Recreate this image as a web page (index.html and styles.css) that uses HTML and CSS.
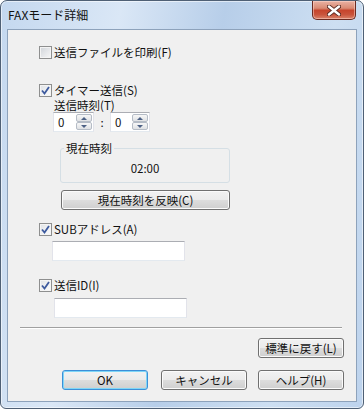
FILE: index.html
```html
<!DOCTYPE html>
<html lang="ja">
<head>
    <meta charset="UTF-8">
    <title>FAXモード詳細</title>
    <link rel="stylesheet" href="styles.css">
</head>
<body>
<div class="window">
    <div class="titlebar">
        <span class="title">FAXモード詳細</span>
        <button class="close">
            <svg width="14" height="11" viewBox="0 0 14 11">
                <path d="M2 1.5 L12 9.5 M12 1.5 L2 9.5" stroke="#5a2a22" stroke-width="4.2" stroke-linecap="round"/>
                <path d="M2 1.5 L12 9.5 M12 1.5 L2 9.5" stroke="#ffffff" stroke-width="2.4" stroke-linecap="round"/>
            </svg>
        </button>
    </div>
    <div class="client">
        <label class="check row-print"><span class="box"></span>送信ファイルを印刷(F)</label>

        <label class="check row-timer"><span class="box checked"><svg width="9" height="9" viewBox="0 0 9 9"><path d="M1 4.5 L3.5 7.5 L8 1" fill="none" stroke="#3d5a9e" stroke-width="1.8"/></svg></span>タイマー送信(S)</label>
        <div class="caption">送信時刻(T)</div>
        <div class="spins">
            <div class="spin">
                <span class="val">0</span>
                <span class="arrows"><span class="arrow"><i class="up"></i></span><span class="arrow"><i class="down"></i></span></span>
            </div>
            <span class="colon">:</span>
            <div class="spin">
                <span class="val">0</span>
                <span class="arrows"><span class="arrow"><i class="up"></i></span><span class="arrow"><i class="down"></i></span></span>
            </div>
        </div>
        <fieldset class="now">
            <legend>現在時刻</legend>
            <div class="time">02:00</div>
        </fieldset>
        <button class="btn reflect">現在時刻を反映(C)</button>

        <label class="check row-sub"><span class="box checked"><svg width="9" height="9" viewBox="0 0 9 9"><path d="M1 4.5 L3.5 7.5 L8 1" fill="none" stroke="#3d5a9e" stroke-width="1.8"/></svg></span>SUBアドレス(A)</label>
        <div class="field field-sub"></div>

        <label class="check row-id"><span class="box checked"><svg width="9" height="9" viewBox="0 0 9 9"><path d="M1 4.5 L3.5 7.5 L8 1" fill="none" stroke="#3d5a9e" stroke-width="1.8"/></svg></span>送信ID(I)</label>
        <div class="field field-id"></div>

        <div class="separator"></div>

        <button class="btn reset">標準に戻す(L)</button>
        <div class="actions">
            <button class="btn ok">OK</button>
            <button class="btn cancel">キャンセル</button>
            <button class="btn help">ヘルプ(H)</button>
        </div>
    </div>
</div>
</body>
</html>
```

FILE: styles.css
```css
body {
    margin: 0;
    background-color: #ffffff;
    font-family: "Noto Sans CJK JP", "Noto Sans", sans-serif;
    font-size: 11.5px;
    color: #111111;
}

.window {
    width: 364px;
    height: 409px;
    box-sizing: border-box;
    border: 1px solid #4f6075;
    border-radius: 7px 7px 6px 6px;
    box-shadow: inset 0 0 0 1px rgba(255, 255, 255, 0.55);
    background: linear-gradient(100deg, #c4d8ef 0%, #dae7f6 28%, #b7cee9 52%, #cddff2 78%, #bdd3ed 100%);
    display: flex;
    flex-direction: column;
}

.titlebar {
    height: 28px;
    display: flex;
    justify-content: space-between;
    align-items: flex-start;
    padding-left: 7px;
}

.title {
    margin-top: 7px;
    line-height: 14px;
    font-size: 12px;
    color: #111111;
}

.close {
    width: 44px;
    height: 19px;
    margin-right: 7px;
    padding: 0;
    border: 1px solid #6b2b22;
    border-top: none;
    border-radius: 0 0 5px 5px;
    background: linear-gradient(#eab2a3 0%, #d98a74 40%, #c6452d 52%, #c9543c 75%, #d9826a 100%);
    box-shadow: inset 0 0 0 1px rgba(255, 220, 210, 0.5);
    display: flex;
    align-items: center;
    justify-content: center;
}

.client {
    flex: 1;
    margin: 0 6px 6px;
    border: 1px solid #8da2bb;
    background-color: #f0f0f0;
    display: flex;
    flex-direction: column;
    align-items: flex-start;
}

/* チェックボックス */
.check {
    display: flex;
    align-items: center;
    gap: 2px;
    height: 13px;
    line-height: 13px;
    margin-left: 31px;
    white-space: nowrap;
}

.box {
    width: 13px;
    height: 13px;
    box-sizing: border-box;
    border: 1px solid #8e8f8f;
    background: linear-gradient(135deg, #cfd3d8 0%, #e4e6e9 50%, #f7f7f7 100%);
    box-shadow: inset 0 0 0 1px #f4f4f4;
    display: flex;
    align-items: center;
    justify-content: center;
}

.box.checked {
    background: linear-gradient(135deg, #dfe2e6 0%, #f2f3f4 60%, #fbfbfb 100%);
}

.row-print { margin-top: 16px; }
.row-timer { margin-top: 25px; }
.row-sub { margin-top: 13px; }
.row-id { margin-top: 18px; }

.caption {
    margin: 2px 0 0 46px;
    line-height: 13px;
}

/* スピンボックス */
.spins {
    display: flex;
    align-items: center;
    margin-left: 45px;
}

.spin {
    width: 41px;
    height: 20px;
    box-sizing: border-box;
    border: 1px solid #abadb3;
    border-color: #abadb3 #e2e3ea #e3e9ef #e2e3ea;
    background-color: #ffffff;
    display: flex;
}

.spin + .colon + .spin {
    width: 40px;
}

.val {
    flex: 1;
    padding-left: 4px;
    line-height: 18px;
}

.arrows {
    width: 17px;
    padding: 1px 1px 1px 0;
    box-sizing: border-box;
    display: flex;
    flex-direction: column;
}

.arrow {
    flex: 1;
    border: 1px solid #b5bcc6;
    border-radius: 2px;
    background: linear-gradient(#f7f7f7, #dfe1e4);
    display: flex;
    align-items: center;
    justify-content: center;
}

.up, .down {
    width: 0;
    height: 0;
    border-left: 3px solid transparent;
    border-right: 3px solid transparent;
}

.up { border-bottom: 3px solid #4d6185; }
.down { border-top: 3px solid #4d6185; }

.colon {
    width: 16px;
    text-align: center;
}

/* 現在時刻 */
.now {
    margin: 9px 0 0 52px;
    padding: 0 0 7px;
    width: 170px;
    min-width: 0;
    box-sizing: border-box;
    border: 1px solid #d5dfe5;
    border-radius: 3px;
}

.now legend {
    margin-left: 3px;
    padding: 0 2px;
    line-height: 14px;
}

.time {
    margin-top: 6px;
    line-height: 14px;
    text-align: center;
}

/* ボタン */
.btn {
    height: 20px;
    width: 86px;
    padding: 0;
    box-sizing: border-box;
    border: 1px solid #707070;
    border-radius: 3px;
    background: linear-gradient(#f2f2f2 0%, #ebebeb 50%, #dddddd 50%, #cfcfcf 100%);
    box-shadow: inset 0 0 0 1px #fbfbfb;
    font-family: inherit;
    font-size: 11.5px;
    line-height: 18px;
    color: #111111;
}

.reflect {
    width: 169px;
    margin: 7px 0 0 53px;
}

.field {
    width: 133px;
    height: 20px;
    box-sizing: border-box;
    border: 1px solid #abadb3;
    border-color: #abadb3 #e2e3ea #e3e9ef #e2e3ea;
    background-color: #ffffff;
    margin-top: 5px;
}

.field-sub { margin-left: 44px; }
.field-id { margin-left: 46px; margin-top: 6px; }

.separator {
    align-self: stretch;
    margin: 9px 14px 0 12px;
    border-top: 1px solid #a0a0a0;
    border-bottom: 1px solid #ffffff;
}

.reset {
    align-self: flex-end;
    margin: 9px 12px 0 0;
}

.actions {
    align-self: flex-end;
    display: flex;
    margin: 12px 12px 0 0;
}

.ok {
    border-color: #3c8fd8;
    box-shadow: inset 0 0 0 1px #7fd6f7;
}

.cancel { margin-left: 13px; }
.help { margin-left: 11px; }
```
